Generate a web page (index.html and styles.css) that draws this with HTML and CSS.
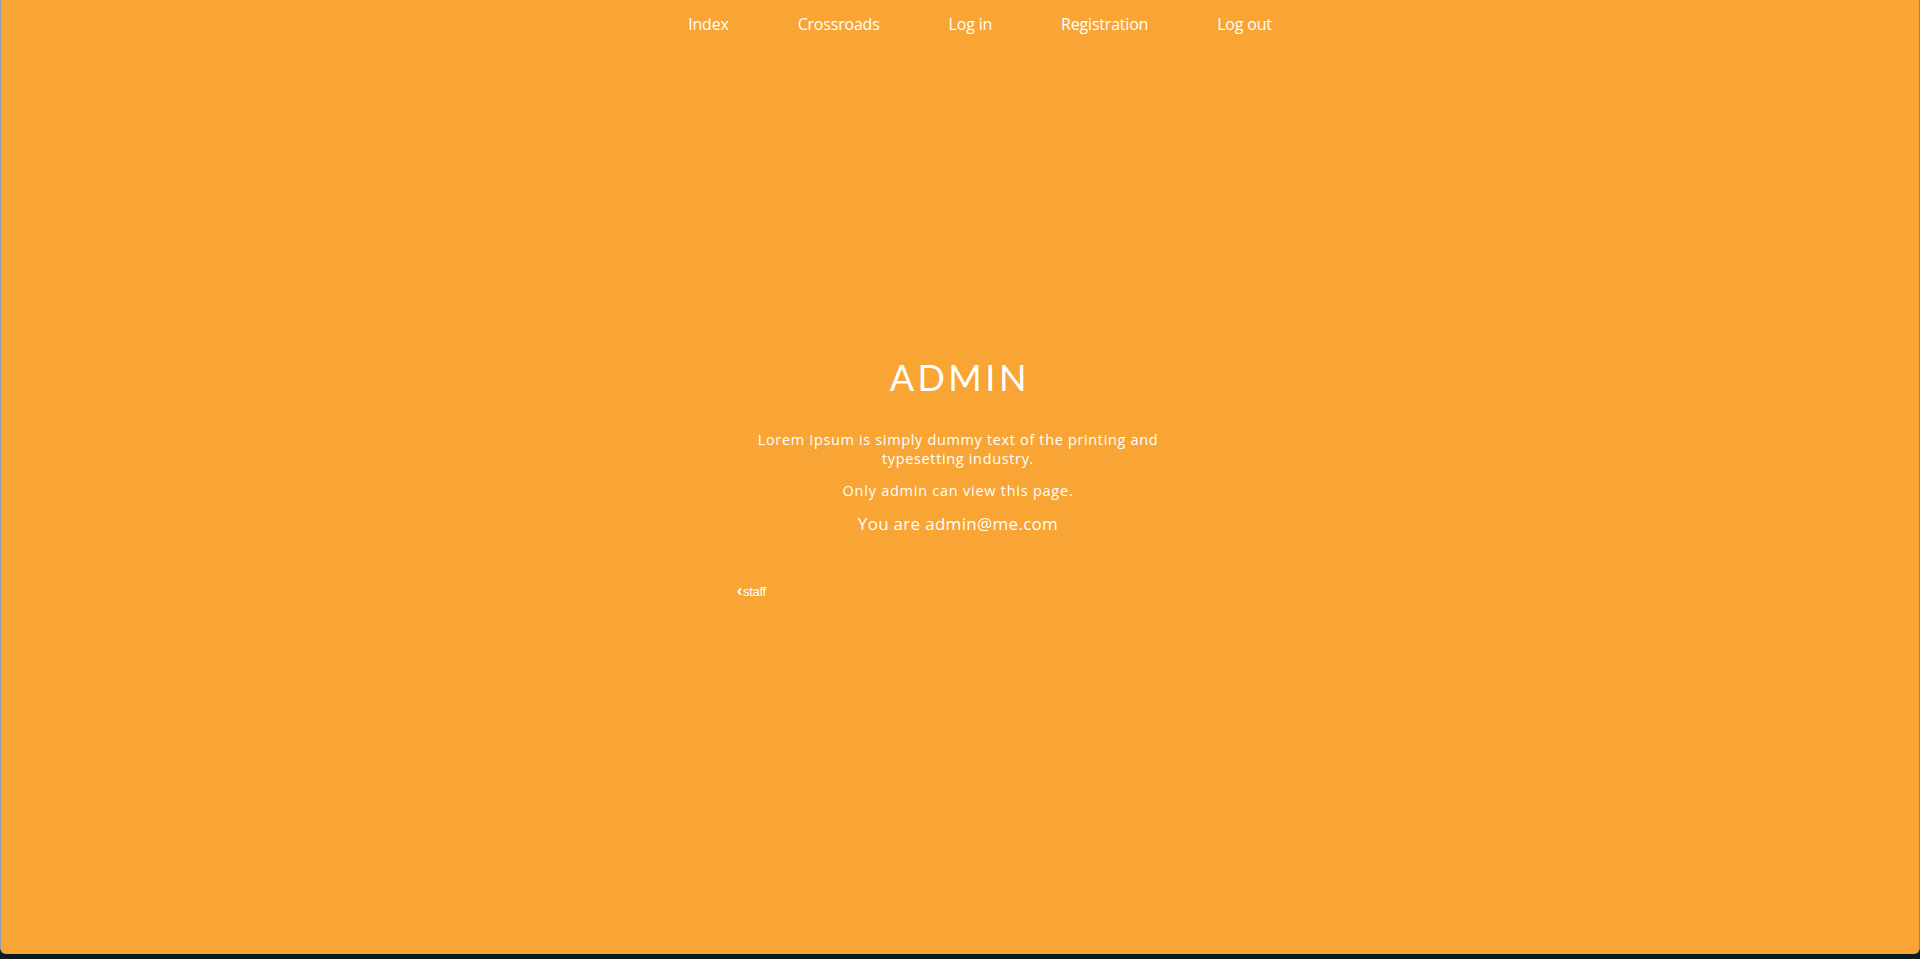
FILE: index.html
```html
<!DOCTYPE html>
<html>
<head>
<meta charset="utf-8">
<title>Admin</title>
<link rel="stylesheet" href="styles.css">
</head>
<body>
<div class="window">
  <nav class="nav">
    <a href="#">Index</a>
    <a href="#">Crossroads</a>
    <a href="#">Log in</a>
    <a href="#">Registration</a>
    <a href="#">Log out</a>
  </nav>
  <main class="main">
    <section class="content">
      <h1 class="title">ADMIN</h1>
      <p class="lead">Lorem Ipsum is simply dummy text of the printing and typesetting industry.</p>
      <p class="note">Only admin can view this page.</p>
      <p class="user">You are admin@me.com</p>
      <a class="back" href="#"><span class="chev">&#8249;</span>staff</a>
    </section>
  </main>
</div>
</body>
</html>
```

FILE: styles.css
```css
html, body {
  margin: 0;
  padding: 0;
  height: 100%;
}
body {
  background: #0f1a1c;
  overflow: hidden;
}
.window {
  box-sizing: border-box;
  width: 1920px;
  height: 954px;
  background: #f8a535;
  border-left: 1px solid #8d9fae;
  border-right: 1px solid #8a8a8a;
  border-radius: 0 0 6px 6px;
  display: flex;
  flex-direction: column;
  color: #fff;
}
.nav {
  display: flex;
  justify-content: center;
  gap: 69px;
  padding: 14px 0 0 40px;
  font-family: "Open Sans", "Liberation Sans", sans-serif;
  font-size: 16px;
  letter-spacing: -0.2px;
  line-height: 20px;
}
.nav a {
  color: #fff;
  text-decoration: none;
}
.main {
  flex: 1;
  display: flex;
  justify-content: center;
  padding-top: 321px;
}
.content {
  width: 450px;
  display: flex;
  flex-direction: column;
  align-items: center;
  text-align: center;
  font-family: "Open Sans", "Lato", sans-serif;
  margin-left: -4px;
}
.title {
  margin: 0;
  font-family: "Lato", sans-serif;
  font-weight: 400;
  font-size: 36px;
  letter-spacing: 3.5px;
  line-height: 44px;
  padding-left: 3.5px;
}
.lead {
  margin: 31px 0 0;
  width: 430px;
  font-size: 14.5px;
  letter-spacing: 0.65px;
  line-height: 19px;
}
.note {
  margin: 13px 0 0;
  font-size: 14.5px;
  letter-spacing: 0.75px;
  line-height: 19px;
}
.user {
  margin: 13px 0 0;
  font-size: 17px;
  letter-spacing: 0.3px;
  line-height: 22px;
}
.back {
  align-self: flex-start;
  margin: 47px 0 0 4px;
  color: #fff;
  text-decoration: none;
  font-family: "Liberation Sans", Arial, sans-serif;
  font-size: 13px;
  letter-spacing: -0.3px;
}
.chev {
  font-weight: 700;
  font-size: 16px;
  margin-right: 1px;
}
```
